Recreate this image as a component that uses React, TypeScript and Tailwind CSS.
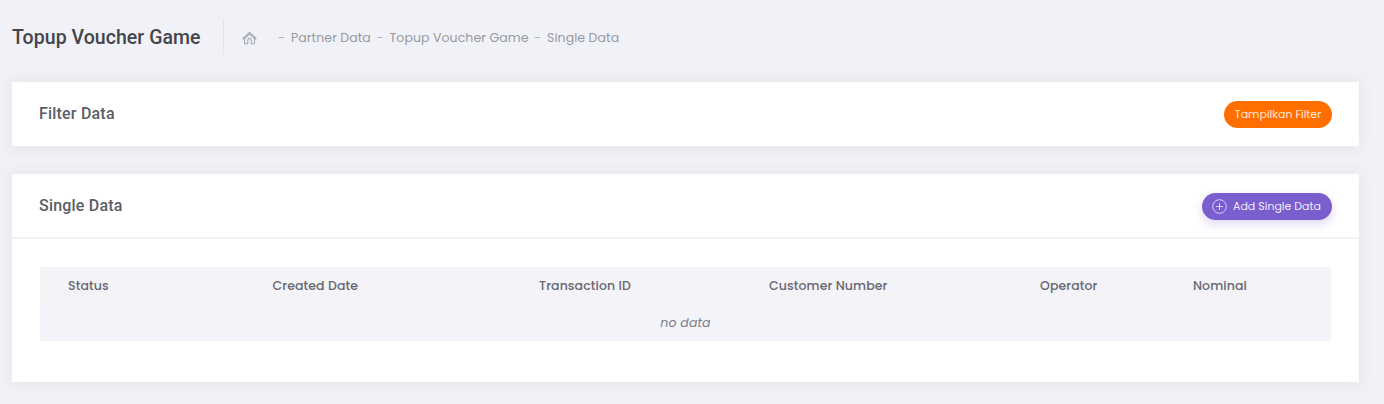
import type { ReactNode } from "react";

function HomeIcon() {
  return (
    <svg width="15" height="14" viewBox="0 0 16 14" fill="none" stroke="#a5a7b4" strokeWidth="1.1" strokeLinejoin="round" strokeLinecap="round">
      <path d="M1 7.4 8 1l7 6.4-.9.9L8 2.8 1.9 8.300z" />
      <path d="M2.700 8v5.200h3.500V9.200a1.800 1.800 0 0 1 3.600 0v4h3.500V8" />
    </svg>
  );
}

function PlusCircle() {
  return (
    <svg width="15" height="15" viewBox="0 0 15 15" fill="none" stroke="#d6cdf3" strokeWidth="1">
      <circle cx="7.500" cy="7.500" r="6.800" />
      <path d="M7.500 4v7M4 7.500h7" />
    </svg>
  );
}

function Card({ title, action, className, children }: { title: string; action: ReactNode; className: string; children?: ReactNode }) {
  return (
    <section className={`bg-white shadow-[0_1px_15px_1px_rgba(69,65,78,0.08)] ${className}`}>
      <header className="flex h-16 items-center justify-between pr-[27px] pl-[27px]">
        <h3 className="font-[Roboto] text-[16px] leading-6 font-medium tracking-[0.2px] text-[#5b5d66]">{title}</h3>
        {action}
      </header>
      {children}
    </section>
  );
}

const crumbs = [
  { label: "Partner Data", width: "w-[98.500px]" },
  { label: "Topup Voucher Game", width: "w-[157.500px]" },
  { label: "Single Data", width: "w-[90px]" },
];

const columns = [
  { label: "Status", width: "w-[204.500px]" },
  { label: "Created Date", width: "w-[266.500px]" },
  { label: "Transaction ID", width: "w-[230px]" },
  { label: "Customer Number", width: "w-[271px]" },
  { label: "Operator", width: "w-[153px]" },
  { label: "Nominal", width: "w-[138px]" },
];

export default function App() {
  return (
    <main className="h-[404px] overflow-hidden bg-[#f1f2f7] pr-[25px] pl-3 font-[Poppins,Inter,sans-serif]">
      <div className="flex h-[82px] items-start pt-[19px]">
        <h1 className="flex h-[35px] w-[212px] items-center border-r border-[#e4e5ec] pt-0.5 font-[Roboto] text-[19.5px] font-medium tracking-[0.05px] whitespace-nowrap text-[#44454c]">
          Topup Voucher Game
        </h1>
        <nav className="flex h-[37px] items-center pl-[18px] text-[12.500px] tracking-[0.08px] whitespace-nowrap text-[#9699a2]">
          <HomeIcon />
          <div className="ml-[21px] flex pt-0.5">
            {crumbs.map((c) => (
              <span key={c.label} className={`flex ${c.width}`}>
                <span className="w-[13px] shrink-0 text-[#b0b2bd]">-</span>
                {c.label}
              </span>
            ))}
          </div>
        </nav>
      </div>

      <Card
        title="Filter Data"
        className="h-16"
        action={
          <button className="mt-px h-[27px] w-[108px] rounded-full bg-[#ff6f00] text-[11px] whitespace-nowrap text-[#ffe6d3]">Tampilkan Filter</button>
        }
      />

      <Card
        title="Single Data"
        className="mt-7 h-52"
        action={
          <button className="mt-px flex h-[27px] w-[130px] items-center gap-[6px] rounded-full bg-[#7b5ecd] pl-2.5 text-[11px] whitespace-nowrap text-[#eeeafa] shadow-[0_4px_9px_1px_rgba(113,83,205,0.2)]">
            <PlusCircle />
            Add Single Data
          </button>
        }
      >
        <div className="-mt-px border-t-2 border-[#f1f2f7] px-7 pt-7">
          <div className="flex h-[37px] bg-[#f4f3f8] pl-7 text-[12.500px] leading-[37px] font-medium tracking-[0.1px] whitespace-nowrap text-[#666872]">
            {columns.map((c) => (
              <div key={c.label} className={`shrink-0 ${c.width}`}>{c.label}</div>
            ))}
          </div>
          <div className="h-[37px] bg-[#f3f4f9] text-center text-[12.500px] leading-[37px] tracking-[0.1px] text-[#7b7d86] italic">no data</div>
        </div>
      </Card>
    </main>
  );
}
